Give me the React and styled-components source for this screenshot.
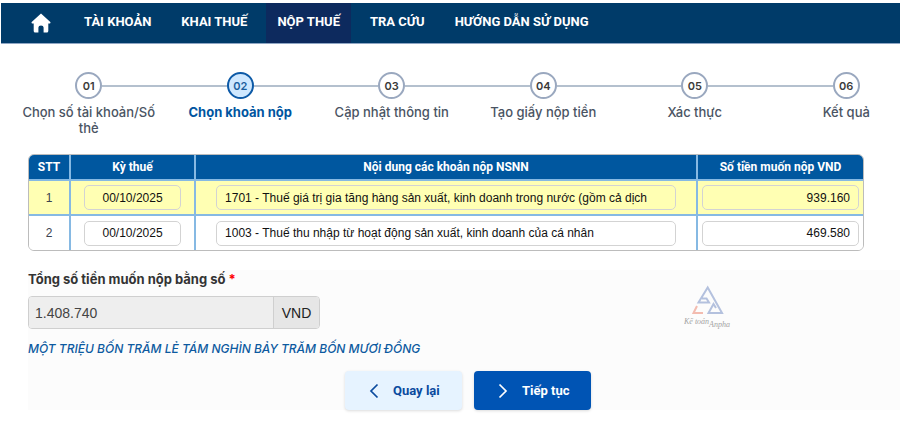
import React from 'react';
import styled, { createGlobalStyle } from 'styled-components';

const GlobalStyle = createGlobalStyle`
  * {
    box-sizing: border-box;
  }

  body {
    margin: 0;
    background: #ffffff;
    color: #3b4350;
    font-family: Inter, 'Open Sans', sans-serif;
    font-size: 13px;
    overflow-x: hidden;
  }
`

const StyledPage = styled.div`
  padding: 3px 0 16px;
  overflow: hidden;
`

const StyledNav = styled.nav`
  display: flex;
  align-items: stretch;
  height: 41px;
  margin-left: 1px;
  padding-left: 20px;
  background: #003b69;
  border-bottom: 1px solid #8fa6c4;
`

const StyledHome = styled.a`
  display: flex;
  align-items: center;
  padding: 0 10px;
  margin-right: 12px;
  color: #ffffff;
`

const StyledNavLink = styled.a`
  display: flex;
  align-items: center;
  padding: 0 11px 4px;
  margin-right: 8px;
  background: ${(props) => (props.$active ? '#0d2a5e' : 'transparent')};
  color: #ffffff;
  font-family: Roboto, sans-serif;
  font-size: 13px;
  font-weight: 700;
  text-decoration: none;
  white-space: nowrap;
`

const StyledSteps = styled.ol`
  display: grid;
  grid-template-columns: repeat(6, 1fr);
  list-style: none;
  margin: 28px -22px 0 13px;
  padding: 0;
`

const StyledStep = styled.li`
  text-align: center;
  font-size: 13px;
  line-height: 16px;
  font-weight: ${(props) => (props.$active ? 700 : 500)};
  color: ${(props) => (props.$active ? '#0055a0' : '#4a5463')};
`

const StyledMarker = styled.div`
  display: flex;
  align-items: center;
  margin-bottom: 5px;

  &::before,
  &::after {
    content: '';
    flex: 1;
    height: 2px;
    background: #b4c0ce;
  }

  ${StyledStep}:first-child &::before,
  ${StyledStep}:last-child &::after {
    background: transparent;
  }
`

const StyledCircle = styled.span`
  display: flex;
  align-items: center;
  justify-content: center;
  width: 27px;
  height: 27px;
  border-radius: 50%;
  border: 2px solid ${(props) => (props.$active ? '#0d5aa7' : '#9aa8bf')};
  background: ${(props) => (props.$active ? '#cfe8ff' : '#ffffff')};
  color: ${(props) => (props.$active ? '#1c5f9e' : '#3a3a3a')};
  font-size: 11px;
  font-weight: 600;
`

const StyledStepName = styled.div`
  padding: 0 4px;
`

const StyledTableBox = styled.div`
  margin: 18px 36px 0 28px;
  border: 1px solid #bcbcbc;
  border-radius: 6px;
  overflow: hidden;
`

const StyledTable = styled.table`
  width: 100%;
  border-collapse: collapse;
  table-layout: fixed;
  font-family: 'Liberation Sans', Arial, sans-serif;
  font-size: 12px;
`

const StyledTh = styled.th`
  width: ${(props) => props.$width || 'auto'};
  height: 25px;
  padding: 0;
  background: #00579f;
  border-right: 2px solid #86b9e3;
  border-bottom: 2px solid #86b9e3;
  color: #ffffff;
  font-family: Roboto, sans-serif;
  font-size: 12px;
  font-weight: 700;

  &:last-child {
    border-right: 0;
  }
`

const StyledRow = styled.tr`
  background: ${(props) => (props.$selected ? '#ffffb3' : '#ffffff')};

  & + & {
    border-top: 2px solid #86b9e3;
  }
`

const StyledTd = styled.td`
  height: 35px;
  padding: 0 ${(props) => props.$side || '0'};
  border-right: 2px solid #86b9e3;
  text-align: center;

  &:last-child {
    border-right: 0;
  }
`

const StyledCellInput = styled.input`
  display: block;
  width: 100%;
  height: 25px;
  padding: 0 8px;
  border: 1px solid #d3d3d3;
  border-radius: 5px;
  background: ${(props) => (props.$selected ? '#ffffb3' : '#ffffff')};
  color: #111111;
  font-family: 'Liberation Sans', Arial, sans-serif;
  font-size: 12px;
  text-align: ${(props) => props.$align || 'left'};
  outline: none;
`

const StyledPanel = styled.section`
  margin: 19px 0 0 28px;
  background: #fcfcfc;
`

const StyledLabel = styled.label`
  display: block;
  color: #333333;
  font-size: 13px;
  font-weight: 700;
  line-height: 18px;
`

const StyledRequired = styled.span`
  color: #ff0000;
`

const StyledTotals = styled.div`
  display: flex;
  justify-content: space-between;
`

const StyledTotal = styled.div`
  display: flex;
  width: 292px;
  height: 33px;
  margin-top: 8px;
  border: 1px solid #cfcfcf;
  border-radius: 4px;
  overflow: hidden;
`

const StyledTotalInput = styled.input`
  flex: 1;
  min-width: 0;
  padding: 0 6px;
  border: 0;
  background: #eeeeee;
  color: #444444;
  font-family: 'Liberation Sans', Arial, sans-serif;
  font-size: 14px;
  outline: none;
`

const StyledUnit = styled.span`
  display: flex;
  align-items: center;
  justify-content: center;
  width: 46px;
  border-left: 1px solid #cfcfcf;
  background: #e6e6e6;
  color: #222222;
  font-family: 'Liberation Sans', Arial, sans-serif;
  font-size: 14px;
`

const StyledWords = styled.p`
  margin: 11px 0 0;
  color: #0d5aa0;
  font-size: 12px;
  font-style: italic;
  font-weight: 500;
  line-height: 18px;
`

const StyledLogo = styled.svg`
  margin: 15px 164px 0 0;
`

const StyledActions = styled.div`
  display: flex;
  justify-content: center;
  gap: 12px;
  margin-top: 13px;
  padding-left: 8px;
`

const StyledButton = styled.button`
  display: flex;
  align-items: center;
  gap: 14px;
  width: 117px;
  height: 39px;
  padding: 0 0 0 24px;
  border: 0;
  border-radius: 4px;
  background: ${(props) => (props.$primary ? '#0054b4' : '#e6f3ff')};
  color: ${(props) => (props.$primary ? '#ffffff' : '#0a4a9e')};
  box-shadow: 0 1px 3px rgba(0, 0, 0, 0.14);
  font-family: Roboto, sans-serif;
  font-size: 13px;
  font-weight: 700;
  cursor: pointer;
`

const menu = [
  { text: 'TÀI KHOẢN' },
  { text: 'KHAI THUẾ' },
  { text: 'NỘP THUẾ', active: true },
  { text: 'TRA CỨU' },
  { text: 'HƯỚNG DẪN SỬ DỤNG' },
];

const steps = [
  'Chọn số tài khoản/Số thẻ',
  'Chọn khoản nộp',
  'Cập nhật thông tin',
  'Tạo giấy nộp tiền',
  'Xác thực',
  'Kết quả',
];

const rows = [
  {
    period: '00/10/2025',
    content: '1701 - Thuế giá trị gia tăng hàng sản xuất, kinh doanh trong nước (gồm cả dịch',
    amount: '939.160',
  },
  {
    period: '00/10/2025',
    content: '1003 - Thuế thu nhập từ hoạt động sản xuất, kinh doanh của cá nhân',
    amount: '469.580',
  },
];

const HomeIcon = () => (
  <svg width="20" height="20" viewBox="0 0 20 20" fill="currentColor">
    <path d="M10 0.5 L19.3 9 Q20 10.3 18.8 10.5 H17.3 V18 Q17.3 19.5 15.8 19.5 H12.6 V14.5 Q12.6 12.5 10 12.5 Q7.4 12.5 7.4 14.5 V19.5 H4.2 Q2.7 19.5 2.7 18 V10.5 H1.2 Q0 10.3 0.7 9 Z" />
  </svg>
);

const Arrow = ({ next }) => (
  <svg width="10" height="16" viewBox="0 0 10 16" fill="none" stroke="currentColor" strokeWidth="1.7">
    <path d={next ? 'M1.5 1.5 L8 8 L1.5 14.5' : 'M8.5 1.5 L2 8 L8.5 14.5'} />
  </svg>
);

const Logo = () => (
  <StyledLogo width="52" height="46" viewBox="0 0 52 46" fill="none" role="img" aria-label="Kế toán Anpha">
    <g stroke="#b4c1de" strokeWidth="2">
      <path d="M18 13.500 H22.500 L25 17.500 H14.500 L23.700 2.500 L38 28 H24.500 L29.500 19 L32 23" />
    </g>
    <path d="M13 21 L9.500 28 H19" stroke="#f3bcb0" strokeWidth="2" />
    <g fill="#a3a3a3" fontFamily="'Liberation Serif', serif" fontStyle="italic" fontSize="8">
      <text x="0" y="39">Kế toán</text>
      <text x="25" y="42">Anpha</text>
    </g>
  </StyledLogo>
);

function App() {
  return (
    <StyledPage>
      <GlobalStyle />

      <StyledNav>
        <StyledHome href="#home" aria-label="Trang chủ"><HomeIcon /></StyledHome>
        {menu.map((item) => (
          <StyledNavLink key={item.text} href="#menu" $active={item.active}>{item.text}</StyledNavLink>
        ))}
      </StyledNav>

      <StyledSteps>
        {steps.map((name, i) => (
          <StyledStep key={name} $active={i === 1}>
            <StyledMarker>
              <StyledCircle $active={i === 1}>{'0' + (i + 1)}</StyledCircle>
            </StyledMarker>
            <StyledStepName>{name}</StyledStepName>
          </StyledStep>
        ))}
      </StyledSteps>

      <StyledTableBox>
        <StyledTable>
          <thead>
            <tr>
              <StyledTh $width="41px">STT</StyledTh>
              <StyledTh $width="15%">Kỳ thuế</StyledTh>
              <StyledTh>Nội dung các khoản nộp NSNN</StyledTh>
              <StyledTh $width="166px">Số tiền muốn nộp VND</StyledTh>
            </tr>
          </thead>
          <tbody>
            {rows.map((row, i) => (
              <StyledRow key={row.content} $selected={i === 0}>
                <StyledTd>{i + 1}</StyledTd>
                <StyledTd $side="13px">
                  <StyledCellInput aria-label="Kỳ thuế" $selected={i === 0} $align="center" defaultValue={row.period} />
                </StyledTd>
                <StyledTd $side="20px">
                  <StyledCellInput aria-label="Nội dung" $selected={i === 0} defaultValue={row.content} />
                </StyledTd>
                <StyledTd $side="4px">
                  <StyledCellInput aria-label="Số tiền" $selected={i === 0} $align="right" defaultValue={row.amount} />
                </StyledTd>
              </StyledRow>
            ))}
          </tbody>
        </StyledTable>
      </StyledTableBox>

      <StyledPanel>
        <StyledTotals>
          <div>
            <StyledLabel htmlFor="total">Tổng số tiền muốn nộp bằng số <StyledRequired>*</StyledRequired></StyledLabel>
            <StyledTotal>
              <StyledTotalInput id="total" readOnly value="1.408.740" />
              <StyledUnit>VND</StyledUnit>
            </StyledTotal>
            <StyledWords>MỘT TRIỆU BỐN TRĂM LẺ TÁM NGHÌN BẢY TRĂM BỐN MƯƠI ĐỒNG</StyledWords>
          </div>
          <Logo />
        </StyledTotals>
        <StyledActions>
          <StyledButton type="button"><Arrow />Quay lại</StyledButton>
          <StyledButton type="button" $primary><Arrow next />Tiếp tục</StyledButton>
        </StyledActions>
      </StyledPanel>
    </StyledPage>
  );
}

export default App;
